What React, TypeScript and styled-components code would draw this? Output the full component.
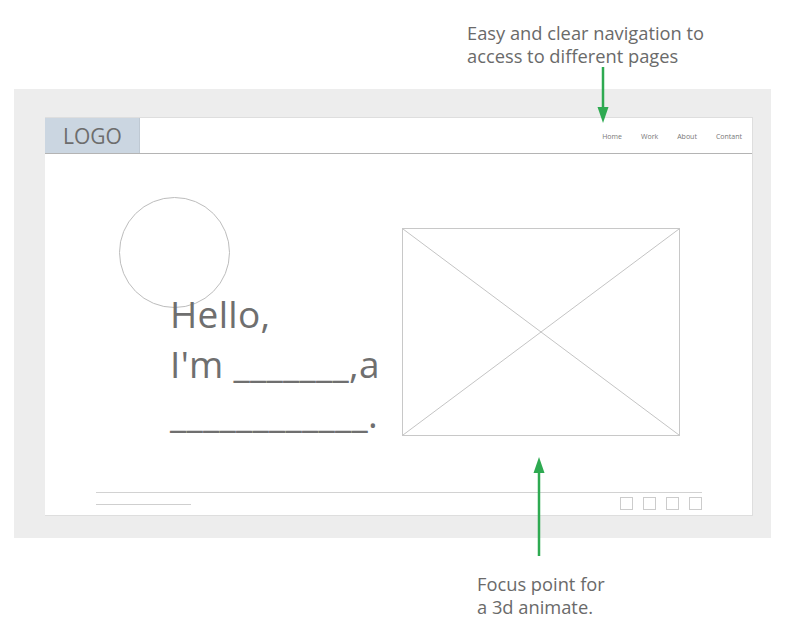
import React from 'react';
import styled, { createGlobalStyle } from 'styled-components';

const GlobalStyle = createGlobalStyle`
  html, body {
    margin: 0;
    padding: 0;
    background: #ffffff;
  }
  body {
    font-family: 'Open Sans', 'Liberation Sans', sans-serif;
  }
`;

const Canvas = styled.div`
  position: relative;
  width: 793px;
  height: 627px;
  overflow: hidden;
`;

const Note = styled.div<{ $left: number; $top: number; $height?: number }>`
  box-sizing: border-box;
  height: ${(p) => (p.$height ? `${p.$height}px` : 'auto')};
  padding-left: ${(p) => p.$left}px;
  padding-top: ${(p) => p.$top}px;
  font-size: 18.3px;
  line-height: 23px;
  color: #6a6a6a;
  white-space: nowrap;
`;

const Frame = styled.div`
  box-sizing: border-box;
  margin-left: 14px;
  width: 757px;
  height: 449px;
  background-color: #ededed;
  padding: 28px 18px 22px 31px;
`;

const Page = styled.div`
  box-sizing: border-box;
  height: 100%;
  background-color: #ffffff;
  border: 1px solid #dedede;
  border-left: none;
  display: flex;
  flex-direction: column;
`;

const Header = styled.div`
  display: flex;
  align-items: stretch;
  justify-content: space-between;
  height: 35px;
  border-bottom: 1px solid #b4b4b4;
`;

const Logo = styled.div`
  width: 95px;
  background-color: #cbd6e1;
  border-right: 1px solid #bfc9d3;
  box-sizing: border-box;
  display: flex;
  align-items: center;
  padding-left: 18px;
  font-size: 21px;
  color: #6d6d6d;
`;

const Nav = styled.nav`
  display: flex;
  align-items: center;
  gap: 19px;
  padding-right: 10px;
  font-size: 7px;
  color: #777777;
  padding-top: 2px;
`;

const Hero = styled.div`
  display: flex;
  align-items: flex-start;
  padding-left: 74px;
`;

const Intro = styled.div`
  width: 283px;
  padding-top: 43px;
`;

const Avatar = styled.div`
  box-sizing: border-box;
  width: 111px;
  height: 111px;
  border-radius: 50%;
  border: 1px solid #bdbdbd;
`;

const Greeting = styled.div`
  margin-top: -19px;
  margin-left: 51px;
  font-size: 37px;
  line-height: 50px;
  color: #6f6f6f;
  white-space: nowrap;
  letter-spacing: 0.3px;
`;

const Placeholder = styled.div`
  margin-top: 74px;
  width: 278px;
  height: 208px;
  box-sizing: border-box;
  border: 1px solid #c8c8c8;

  svg {
    display: block;
    width: 100%;
    height: 100%;
  }
`;

const Footer = styled.div`
  margin: auto 50px 0 51px;
  border-top: 1px solid #d2d2d2;
  padding: 4px 0 5px;
  display: flex;
  justify-content: space-between;
  align-items: flex-start;
`;

const ShortLine = styled.div`
  margin-top: 7px;
  width: 95px;
  height: 1px;
  background-color: #cfcfcf;
`;

const Squares = styled.div`
  display: flex;
  gap: 10px;
`;

const Square = styled.div`
  box-sizing: border-box;
  width: 13px;
  height: 13px;
  border: 1px solid #cccccc;
`;

const Arrow = styled.svg<{ $x: number; $y: number }>`
  position: absolute;
  left: ${(p) => p.$x}px;
  top: ${(p) => p.$y}px;
  overflow: visible;
`;

const GREEN = '#2eaa51';

const App: React.FC = () => {
  return (
    <Canvas>
      <GlobalStyle />
      <Note $left={467} $top={21} $height={89}>
        Easy and clear navigation to
        <br />
        access to different pages
      </Note>

      <Frame>
        <Page>
          <Header>
            <Logo>LOGO</Logo>
            <Nav>
              <span>Home</span>
              <span>Work</span>
              <span>About</span>
              <span>Contant</span>
            </Nav>
          </Header>

          <Hero>
            <Intro>
              <Avatar />
              <Greeting>
                Hello,
                <br />
                I'm _______,a
                <br />
                ____________.
              </Greeting>
            </Intro>
            <Placeholder>
              <svg viewBox="0 0 276 206" preserveAspectRatio="none">
                <line x1="0" y1="0" x2="276" y2="206" stroke="#c4c4c4" strokeWidth="1" />
                <line x1="276" y1="0" x2="0" y2="206" stroke="#c4c4c4" strokeWidth="1" />
              </svg>
            </Placeholder>
          </Hero>

          <Footer>
            <ShortLine />
            <Squares>
              {[0, 1, 2, 3].map((i) => (
                <Square key={i} />
              ))}
            </Squares>
          </Footer>
        </Page>
      </Frame>

      <Note $left={477} $top={34}>
        Focus point for
        <br />
        a 3d animate.
      </Note>

      <Arrow $x={597} $y={67} width="12" height="56" viewBox="0 0 12 56">
        <line x1="6" y1="0" x2="6" y2="42" stroke={GREEN} strokeWidth="2.5" />
        <polygon points="0.5,40 11.5,40 6,56" fill={GREEN} />
      </Arrow>

      <Arrow $x={533} $y={457} width="12" height="99" viewBox="0 0 12 99">
        <polygon points="6,0 0.5,16 11.5,16" fill={GREEN} />
        <line x1="6" y1="14" x2="6" y2="99" stroke={GREEN} strokeWidth="2.5" />
      </Arrow>
    </Canvas>
  );
};

export default App;
